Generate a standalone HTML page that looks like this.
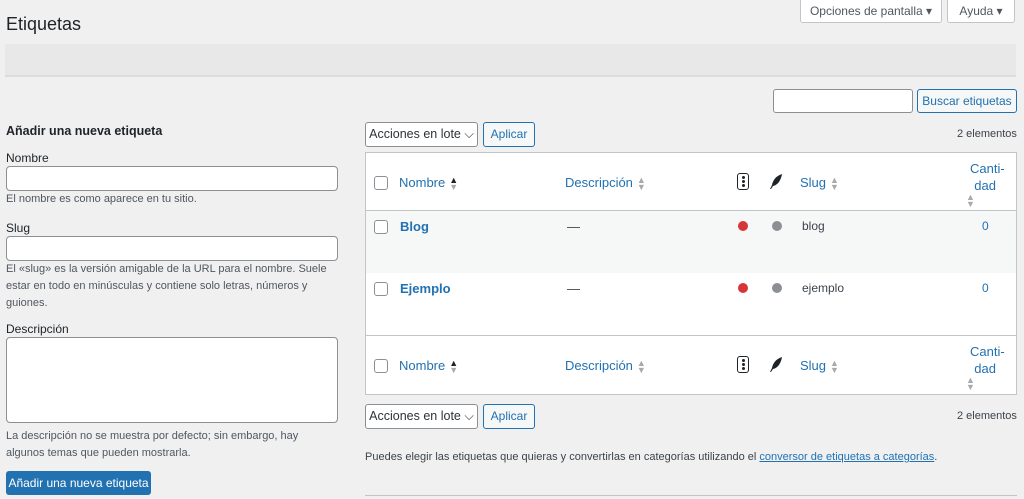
<!DOCTYPE html><html><head><meta charset="utf-8"><style>
*{box-sizing:border-box;margin:0;padding:0}
body{width:1024px;height:499px;overflow:hidden;background:#f0f0f1;font-family:"Liberation Sans",sans-serif;font-size:13px;color:#3c434a;position:relative}
.a{position:absolute}
.btn{position:absolute;border:1px solid #c3c4c7;background:#fff;border-radius:3px;font-size:12px;color:#50575e;text-align:center}
.bb{position:absolute;border:1px solid #2271b1;color:#2271b1;background:#f6f7f7;border-radius:3px;font-size:12px;text-align:center}
.in{position:absolute;background:#fff;border:1px solid #8c8f94;border-radius:4px}
.lnk{color:#2271b1}
.cb{position:absolute;width:14px;height:14px;border:1px solid #8c8f94;border-radius:3px;background:#fff}
.sort{display:inline-block;font-size:9px;line-height:7px;color:#a7aaad;vertical-align:middle;margin-left:4px}
.dot{position:absolute;width:10px;height:10px;border-radius:50%}
.small{font-size:11px;color:#50575e;line-height:17px}
</style></head><body>
<div class="a" style="left:6px;top:14px;font-size:18px;color:#1d2327">Etiquetas</div>
<div class="btn" style="left:800px;top:-2px;width:142px;height:25px;line-height:24px">Opciones de pantalla ▾</div>
<div class="btn" style="left:947px;top:-2px;width:68px;height:25px;line-height:24px">Ayuda ▾</div>
<div class="a" style="left:5px;top:44px;width:1011px;height:33px;background:#e8e8e8;border-bottom:2px solid #dcdcde"></div>
<div class="in" style="left:773px;top:89px;width:140px;height:24px;border-radius:3px"></div>
<div class="bb" style="left:917px;top:89px;width:100px;height:24px;line-height:22px">Buscar etiquetas</div>

<div class="a" style="left:6px;top:124px;font-weight:bold;font-size:12.5px;color:#1d2327">Añadir una nueva etiqueta</div>
<div class="a" style="left:6px;top:151px;font-size:12px;color:#1d2327">Nombre</div>
<div class="in" style="left:6px;top:166px;width:332px;height:25px"></div>
<div class="a small" style="left:6px;top:191px">El nombre es como aparece en tu sitio.</div>
<div class="a" style="left:6px;top:221px;font-size:12px;color:#1d2327">Slug</div>
<div class="in" style="left:6px;top:236px;width:332px;height:25px"></div>
<div class="a small" style="left:6px;top:261px;width:330px">El «slug» es la versión amigable de la URL para el nombre. Suele estar en todo en minúsculas y contiene solo letras, números y guiones.</div>
<div class="a" style="left:6px;top:322px;font-size:12px;color:#1d2327">Descripción</div>
<div class="in" style="left:6px;top:337px;width:332px;height:86px"></div>
<div class="a small" style="left:6px;top:428px;width:330px">La descripción no se muestra por defecto; sin embargo, hay algunos temas que pueden mostrarla.</div>
<div class="a" style="left:6px;top:471px;width:145px;height:24px;background:#2271b1;border-radius:3px;color:#fff;font-size:12px;text-align:center;line-height:24px">Añadir una nueva etiqueta</div>

<div class="btn" style="left:365px;top:122px;width:113px;height:25px;line-height:23px;color:#2c3338;font-size:12.5px;border-color:#8c8f94">Acciones en lote ⌵</div>
<div class="bb" style="left:483px;top:122px;width:52px;height:25px;line-height:23px">Aplicar</div>
<div class="a" style="left:957px;top:128px;font-size:11px">2 elementos</div>

<div class="a" style="left:365px;top:152px;width:652px;height:243px;border:1px solid #c3c4c7;background:#fff"></div>
<div class="a" style="left:366px;top:210px;width:650px;height:1px;background:#c3c4c7"></div>
<div class="a" style="left:366px;top:211px;width:650px;height:62px;background:#f6f7f7"></div>
<div class="a" style="left:366px;top:335px;width:650px;height:1px;background:#c3c4c7"></div>

<div class="cb" style="left:374px;top:176px"></div>
<div class="a lnk" style="left:399px;top:175px">Nombre<span class="sort" style="color:#1d2327">▲<br><span style="color:#a7aaad">▼</span></span></div>
<div class="a lnk" style="left:565px;top:175px">Descripción<span class="sort">▲<br>▼</span></div>
<div class="a" style="left:737px;top:173px;width:12px;height:17px;border:1.5px solid #1d2327;border-radius:3px"><div style="width:3px;height:3px;background:#1d2327;border-radius:50%;margin:2px auto 1px"></div><div style="width:3px;height:3px;background:#1d2327;border-radius:50%;margin:0 auto 1px"></div><div style="width:3px;height:3px;background:#1d2327;border-radius:50%;margin:0 auto"></div></div>
<svg class="a" style="left:769px;top:173px" width="14" height="17" viewBox="0 0 14 17"><path d="M13 1C7 3 4 7 3 12L1 16L2 16L4 13C9 12 12 7 13 1Z" fill="#1d2327"/></svg>
<div class="a lnk" style="left:800px;top:175px">Slug<span class="sort">▲<br>▼</span></div>
<div class="a lnk" style="left:970px;top:160px;line-height:17px;text-align:right;width:26px">Canti-<br>dad</div>
<div class="a sort" style="left:962px;top:194px">▲<br>▼</div>

<div class="cb" style="left:374px;top:359px"></div>
<div class="a lnk" style="left:399px;top:358px">Nombre<span class="sort" style="color:#1d2327">▲<br><span style="color:#a7aaad">▼</span></span></div>
<div class="a lnk" style="left:565px;top:358px">Descripción<span class="sort">▲<br>▼</span></div>
<div class="a" style="left:737px;top:356px;width:12px;height:17px;border:1.5px solid #1d2327;border-radius:3px"><div style="width:3px;height:3px;background:#1d2327;border-radius:50%;margin:2px auto 1px"></div><div style="width:3px;height:3px;background:#1d2327;border-radius:50%;margin:0 auto 1px"></div><div style="width:3px;height:3px;background:#1d2327;border-radius:50%;margin:0 auto"></div></div>
<svg class="a" style="left:769px;top:356px" width="14" height="17" viewBox="0 0 14 17"><path d="M13 1C7 3 4 7 3 12L1 16L2 16L4 13C9 12 12 7 13 1Z" fill="#1d2327"/></svg>
<div class="a lnk" style="left:800px;top:358px">Slug<span class="sort">▲<br>▼</span></div>
<div class="a lnk" style="left:970px;top:343px;line-height:17px;text-align:right;width:26px">Canti-<br>dad</div>
<div class="a sort" style="left:962px;top:377px">▲<br>▼</div>

<div class="cb" style="left:374px;top:220px"></div>
<div class="a lnk" style="left:400px;top:219px;font-weight:bold">Blog</div>
<div class="a" style="left:567px;top:219px">—</div>
<div class="dot" style="left:738px;top:221px;background:#d63638"></div>
<div class="dot" style="left:772px;top:221px;background:#8c8f94"></div>
<div class="a" style="left:802px;top:219px;font-size:12px">blog</div>
<div class="a lnk" style="left:982px;top:219px;font-size:12px">0</div>

<div class="cb" style="left:374px;top:282px"></div>
<div class="a lnk" style="left:400px;top:281px;font-weight:bold">Ejemplo</div>
<div class="a" style="left:567px;top:281px">—</div>
<div class="dot" style="left:738px;top:283px;background:#d63638"></div>
<div class="dot" style="left:772px;top:283px;background:#8c8f94"></div>
<div class="a" style="left:802px;top:281px;font-size:12px">ejemplo</div>
<div class="a lnk" style="left:982px;top:281px;font-size:12px">0</div>

<div class="btn" style="left:365px;top:404px;width:113px;height:25px;line-height:23px;color:#2c3338;font-size:12.5px;border-color:#8c8f94">Acciones en lote ⌵</div>
<div class="bb" style="left:483px;top:404px;width:52px;height:25px;line-height:23px">Aplicar</div>
<div class="a" style="left:957px;top:410px;font-size:11px">2 elementos</div>

<div class="a" style="left:365px;top:451px;font-size:11px">Puedes elegir las etiquetas que quieras y convertirlas en categorías utilizando el <span class="lnk" style="text-decoration:underline">conversor de etiquetas a categorías</span>.</div>
<div class="a" style="left:365px;top:495px;width:652px;height:1px;background:#c3c4c7"></div>
</body></html>
